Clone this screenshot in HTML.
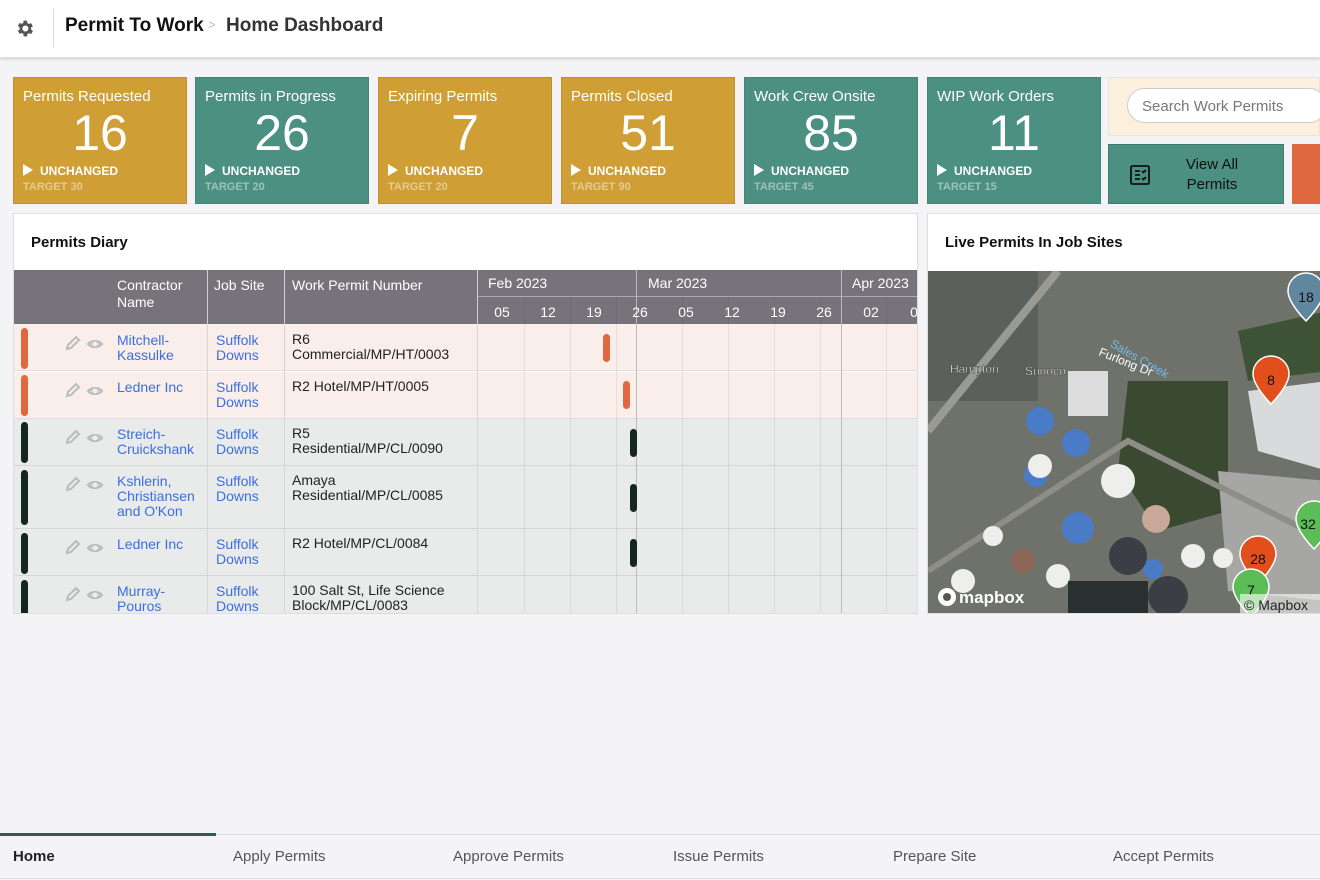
<!DOCTYPE html>
<html><head><meta charset="utf-8"><style>
*{box-sizing:border-box;margin:0;padding:0}
body{width:1320px;height:880px;overflow:hidden;background:#f4f4f6;font-family:"Liberation Sans",sans-serif;position:relative;color:#222}
.a{position:absolute}
.hdr{left:0;top:0;width:1320px;height:58px;background:#fff;box-shadow:0 1px 3px rgba(0,0,0,.15);border-bottom:1px solid #ddd}
.card{top:77px;width:174px;height:127px;color:#fff;border:1px solid rgba(0,0,0,.08)}
.gold{background:#cf9e34}.teal{background:#4b9080}
.card .t{position:absolute;left:9px;top:10px;font-size:15px}
.card .n{position:absolute;left:0;width:100%;text-align:center;top:28px;font-size:50px;line-height:54px}
.card .u{position:absolute;left:9px;top:86px;font-size:12px;font-weight:bold}
.card .u:before{content:"";display:inline-block;border-left:10px solid #fff;border-top:6px solid transparent;border-bottom:6px solid transparent;vertical-align:-1px;margin-right:7px}
.card .g{position:absolute;left:9px;top:103px;font-size:11px;font-weight:bold;color:rgba(255,255,255,.45)}
.panel{background:#fff;border:1px solid #ddd}
.th{background:#77737a;color:#fff;font-size:14px}
.lnk{color:#3b6fe0;font-size:14px;line-height:15px}
.txt{font-size:14px;line-height:15px;color:#222}
.nav{font-size:15px;color:#555;top:848px}
</style></head><body>
<div class="a hdr">
<svg class="a" style="left:14px;top:18px" width="21" height="21" viewBox="0 0 24 24"><path fill="#555" d="M19.4 13a7.5 7.5 0 000-2l2.1-1.6-2-3.5-2.5 1a7 7 0 00-1.7-1L15 3h-4l-.4 2.7a7 7 0 00-1.7 1l-2.5-1-2 3.5L6.6 11a7.5 7.5 0 000 2l-2.1 1.6 2 3.5 2.5-1a7 7 0 001.7 1L11 21h4l.4-2.7a7 7 0 001.7-1l2.5 1 2-3.5zM13 15.5a3.5 3.5 0 110-7 3.5 3.5 0 010 7z"/></svg>
<div class="a" style="left:53px;top:9px;width:1px;height:38px;background:#ddd"></div>
<div class="a" style="left:65px;top:15px;font-size:19px;font-weight:bold;color:#111">Permit To Work</div>
<div class="a" style="left:208px;top:17px;font-size:13px;color:#bbb">&gt;</div>
<div class="a" style="left:226px;top:15px;font-size:19px;font-weight:bold;color:#333">Home Dashboard</div>
</div>

<div class="a card gold" style="left:13px"><div class="t">Permits Requested</div><div class="n">16</div><div class="u">UNCHANGED</div><div class="g">TARGET 30</div></div>
<div class="a card teal" style="left:195px"><div class="t">Permits in Progress</div><div class="n">26</div><div class="u">UNCHANGED</div><div class="g">TARGET 20</div></div>
<div class="a card gold" style="left:378px"><div class="t">Expiring Permits</div><div class="n">7</div><div class="u">UNCHANGED</div><div class="g">TARGET 20</div></div>
<div class="a card gold" style="left:561px"><div class="t">Permits Closed</div><div class="n">51</div><div class="u">UNCHANGED</div><div class="g">TARGET 90</div></div>
<div class="a card teal" style="left:744px"><div class="t">Work Crew Onsite</div><div class="n">85</div><div class="u">UNCHANGED</div><div class="g">TARGET 45</div></div>
<div class="a card teal" style="left:927px"><div class="t">WIP Work Orders</div><div class="n">11</div><div class="u">UNCHANGED</div><div class="g">TARGET 15</div></div>

<div class="a" style="left:1108px;top:77px;width:212px;height:59px;background:#fcf0dc;border:1px solid #e4e4e4"></div>
<div class="a" style="left:1127px;top:88px;width:200px;height:35px;background:#fff;border:1px solid #ccc;border-radius:18px;font-size:15px;color:#777;padding:9px 0 0 14px">Search Work Permits</div>
<div class="a" style="left:1108px;top:144px;width:176px;height:60px;background:#4b9080;border:1px solid #3f7a6c"></div>
<svg class="a" style="left:1130px;top:165px" width="20" height="20" viewBox="0 0 20 20" fill="none" stroke="#111" stroke-width="1.8"><rect x="1" y="1" width="18" height="18" rx="1.5"/><path d="M5 6h5M5 10h5M5 14h5M12 6l1.5 1.5L16 5M12 13l1.5 1.5L16 12"/></svg>
<div class="a" style="left:1160px;top:155px;width:104px;text-align:center;font-size:15px;line-height:20px;color:#111">View All<br>Permits</div>
<div class="a" style="left:1292px;top:144px;width:30px;height:60px;background:#e0683f"></div>

<div class="a panel" style="left:13px;top:213px;width:905px;height:401px;overflow:hidden">
<div class="a" style="left:17px;top:20px;font-size:15px;font-weight:bold;color:#111">Permits Diary</div>
<div class="a th" style="left:0;top:56px;width:905px;height:54px"></div>
<div class="a" style="left:193px;top:56px;width:1px;height:345px;background:#d0d0d0"></div>
<div class="a" style="left:270px;top:56px;width:1px;height:345px;background:#d0d0d0"></div>
<div class="a" style="left:463px;top:56px;width:1px;height:345px;background:#d0d0d0"></div>
<div class="a" style="left:103px;top:63px;color:#fff;font-size:14px;line-height:17px">Contractor<br>Name</div>
<div class="a" style="left:200px;top:63px;color:#fff;font-size:14px">Job Site</div>
<div class="a" style="left:278px;top:63px;color:#fff;font-size:14px">Work Permit Number</div>
<div class="a" style="left:464px;top:82px;width:441px;height:1px;background:#aaa"></div>
<div class="a" style="left:474px;top:61px;color:#fff;font-size:14px">Feb 2023</div>
<div class="a" style="left:634px;top:61px;color:#fff;font-size:14px">Mar 2023</div>
<div class="a" style="left:838px;top:61px;color:#fff;font-size:14px">Apr 2023</div>
<div class="a" style="left:622px;top:56px;width:1px;height:345px;background:#bbb"></div>
<div class="a" style="left:827px;top:56px;width:1px;height:345px;background:#bbb"></div>
<div class="a" style="left:0;top:110px;width:905px;height:47px;background:#f9eeea;border-bottom:1px solid #ddd"></div>
<div class="a" style="left:0;top:158px;width:905px;height:47px;background:#f9eeea;border-bottom:1px solid #ddd"></div>
<div class="a" style="left:0;top:205px;width:905px;height:47px;background:#e9eaea;border-bottom:1px solid #d6d6d6"></div>
<div class="a" style="left:0;top:252px;width:905px;height:63px;background:#e9eaea;border-bottom:1px solid #d6d6d6"></div>
<div class="a" style="left:0;top:315px;width:905px;height:47px;background:#e9eaea;border-bottom:1px solid #d6d6d6"></div>
<div class="a" style="left:0;top:362px;width:905px;height:40px;background:#e9eaea"></div>
<div class="a" style="left:193px;top:110px;width:1px;height:291px;background:#d6d6d6"></div>
<div class="a" style="left:270px;top:110px;width:1px;height:291px;background:#d6d6d6"></div>
<div class="a" style="left:463px;top:110px;width:1px;height:291px;background:#d6d6d6"></div>
<div class="a" style="left:622px;top:110px;width:1px;height:291px;background:#bbb"></div>
<div class="a" style="left:827px;top:110px;width:1px;height:291px;background:#bbb"></div>
<svg class="a" style="left:464px;top:83px" width="441" height="318"><g stroke="rgba(0,0,0,.07)"><line x1="46.5" y1="0" x2="46.5" y2="318"/><line x1="92.5" y1="0" x2="92.5" y2="318"/><line x1="138.5" y1="0" x2="138.5" y2="318"/><line x1="204.5" y1="0" x2="204.5" y2="318"/><line x1="250.5" y1="0" x2="250.5" y2="318"/><line x1="296.5" y1="0" x2="296.5" y2="318"/><line x1="342.5" y1="0" x2="342.5" y2="318"/><line x1="408.5" y1="0" x2="408.5" y2="318"/></g>
<g fill="#fff" font-size="14" font-family="Liberation Sans" text-anchor="middle"><text x="24" y="20">05</text><text x="70" y="20">12</text><text x="116" y="20">19</text><text x="162" y="20">26</text><text x="208" y="20">05</text><text x="254" y="20">12</text><text x="300" y="20">19</text><text x="346" y="20">26</text><text x="393" y="20">02</text><text x="436" y="20">0</text></g>
<rect x="125" y="37" width="7" height="28" rx="3.5" fill="#e0683f"/><rect x="145" y="84" width="7" height="28" rx="3.5" fill="#e0683f"/>
<rect x="152" y="132" width="7" height="28" rx="3.5" fill="#14261f"/><rect x="152" y="187" width="7" height="28" rx="3.5" fill="#14261f"/><rect x="152" y="242" width="7" height="28" rx="3.5" fill="#14261f"/>
</svg>
<div class="a" style="left:7px;top:114px;width:7px;height:41px;border-radius:4px;background:#e0683f"></div>
<div class="a" style="left:7px;top:161px;width:7px;height:41px;border-radius:4px;background:#e0683f"></div>
<div class="a" style="left:7px;top:208px;width:7px;height:41px;border-radius:4px;background:#14261f"></div>
<div class="a" style="left:7px;top:256px;width:7px;height:55px;border-radius:4px;background:#14261f"></div>
<div class="a" style="left:7px;top:319px;width:7px;height:41px;border-radius:4px;background:#14261f"></div>
<div class="a" style="left:7px;top:366px;width:7px;height:41px;border-radius:4px;background:#14261f"></div>
<svg class="a" style="left:50px;top:118px" width="50" height="280" fill="none" stroke="#bbb" stroke-width="2">
<g id="ic"><path d="M3 17l1-4L12 5l3 3-8 8z"/><path d="M24 12c3-4 11-4 14 0-3 4-11 4-14 0z" fill="#ccc" stroke="#bbb"/><circle cx="31" cy="12" r="2.5" fill="#eee" stroke="none"/></g>
<use href="#ic" y="47"/><use href="#ic" y="94"/><use href="#ic" y="141"/><use href="#ic" y="204"/><use href="#ic" y="251"/></svg>
<div class="a lnk" style="left:103px;top:119px">Mitchell-<br>Kassulke</div>
<div class="a lnk" style="left:103px;top:166px">Ledner Inc</div>
<div class="a lnk" style="left:103px;top:213px">Streich-<br>Cruickshank</div>
<div class="a lnk" style="left:103px;top:260px">Kshlerin,<br>Christiansen<br>and O'Kon</div>
<div class="a lnk" style="left:103px;top:323px">Ledner Inc</div>
<div class="a lnk" style="left:103px;top:370px">Murray-<br>Pouros</div>
<div class="a lnk" style="left:202px;top:119px">Suffolk<br>Downs</div>
<div class="a lnk" style="left:202px;top:166px">Suffolk<br>Downs</div>
<div class="a lnk" style="left:202px;top:213px">Suffolk<br>Downs</div>
<div class="a lnk" style="left:202px;top:260px">Suffolk<br>Downs</div>
<div class="a lnk" style="left:202px;top:323px">Suffolk<br>Downs</div>
<div class="a lnk" style="left:202px;top:370px">Suffolk<br>Downs</div>
<div class="a txt" style="left:278px;top:118px">R6<br>Commercial/MP/HT/0003</div>
<div class="a txt" style="left:278px;top:165px">R2 Hotel/MP/HT/0005</div>
<div class="a txt" style="left:278px;top:212px">R5<br>Residential/MP/CL/0090</div>
<div class="a txt" style="left:278px;top:259px">Amaya<br>Residential/MP/CL/0085</div>
<div class="a txt" style="left:278px;top:322px">R2 Hotel/MP/CL/0084</div>
<div class="a txt" style="left:278px;top:369px">100 Salt St, Life Science<br>Block/MP/CL/0083</div>
</div>

<div class="a panel" style="left:927px;top:213px;width:400px;height:401px;overflow:hidden">
<div class="a" style="left:17px;top:20px;font-size:15px;font-weight:bold;color:#111">Live Permits In Job Sites</div>
<svg class="a" style="left:0;top:57px" width="400" height="344" font-family="Liberation Sans">
<rect width="400" height="344" fill="#6f716b"/>
<rect x="0" y="0" width="110" height="130" fill="#5c605c"/>
<path d="M200 110 L300 110 L300 240 L230 260 L190 200z" fill="#3a4a30"/>
<path d="M310 60 L400 40 L400 100 L320 110z" fill="#3e5236"/>
<path d="M320 120 L400 110 L400 200 L330 180z" fill="#d8dadc"/>
<path d="M290 200 L400 210 L400 330 L300 320z" fill="#a6a7a4"/>
<path d="M0 160 L130 0" stroke="#9a9a94" stroke-width="8"/>
<path d="M0 300 L200 170 L400 270" stroke="#8e8d88" stroke-width="6" fill="none"/>
<rect x="140" y="100" width="40" height="45" fill="#dcdcdc"/>
<g fill="#4a7bc7"><circle cx="112" cy="150" r="14"/><circle cx="148" cy="172" r="14"/><circle cx="108" cy="204" r="12"/><circle cx="150" cy="257" r="16"/><circle cx="225" cy="298" r="10"/></g>
<g fill="#eeeeec"><circle cx="112" cy="195" r="12"/><circle cx="190" cy="210" r="17"/><circle cx="65" cy="265" r="10"/><circle cx="265" cy="285" r="12"/><circle cx="295" cy="287" r="10"/><circle cx="35" cy="310" r="12"/><circle cx="130" cy="305" r="12"/></g>
<g fill="#3b3e44"><circle cx="200" cy="285" r="19"/><circle cx="240" cy="325" r="20"/></g>
<circle cx="228" cy="248" r="14" fill="#c8a898"/><circle cx="95" cy="290" r="12" fill="#8c6656"/>
<rect x="140" y="310" width="80" height="40" fill="#2a3030"/>
<g fill="#fff" font-size="12" stroke="#333" stroke-width=".4"><text x="22" y="102">Hampton</text><text x="97" y="104">Sunoco</text></g>
<text x="180" y="80" fill="#7ab8e0" font-size="12" transform="rotate(30 190 80)">Sales Creek</text>
<text x="170" y="84" fill="#fff" font-size="12" transform="rotate(22 170 84)">Furlong Dr</text>
<g stroke="#fff" stroke-width="1.5"><path d="M378 2a18 18 0 0118 18c0 12-18 30-18 30s-18-18-18-30a18 18 0 0118-18z" fill="#60879e"/><path d="M343 85a18 18 0 0118 18c0 12-18 30-18 30s-18-18-18-30a18 18 0 0118-18z" fill="#e24e1c"/><path d="M386 230a18 18 0 0118 18c0 12-18 30-18 30s-18-18-18-30a18 18 0 0118-18z" fill="#5cbd57"/><path d="M330 265a18 18 0 0118 18c0 12-18 30-18 30s-18-18-18-30a18 18 0 0118-18z" fill="#e24e1c"/><path d="M323 298a18 18 0 0118 18c0 12-18 30-18 30s-18-18-18-30a18 18 0 0118-18z" fill="#5cbd57"/></g>
<g font-size="14" fill="#111" text-anchor="middle"><text x="378" y="31">18</text><text x="343" y="114">8</text><text x="380" y="258">32</text><text x="330" y="293">28</text><text x="323" y="324">7</text></g>
<circle cx="19" cy="326" r="9" fill="#fff"/><circle cx="19" cy="326" r="4" fill="#555"/>
<text x="31" y="332" font-size="17" font-weight="bold" fill="#fff">mapbox</text>
<rect x="312" y="323" width="90" height="21" fill="rgba(255,255,255,.6)"/>
<text x="316" y="339" font-size="14" fill="#222">© Mapbox</text>
</svg>
</div>

<div class="a" style="left:0;top:834px;width:1320px;height:1px;background:#ddd"></div>
<div class="a" style="left:0;top:833px;width:216px;height:3px;background:#2f5e50"></div>
<div class="a" style="left:0;top:878px;width:1320px;height:1px;background:#ddd"></div>
<div class="a nav" style="left:13px;color:#222;font-weight:bold">Home</div>
<div class="a nav" style="left:233px">Apply Permits</div>
<div class="a nav" style="left:453px">Approve Permits</div>
<div class="a nav" style="left:673px">Issue Permits</div>
<div class="a nav" style="left:893px">Prepare Site</div>
<div class="a nav" style="left:1113px">Accept Permits</div>
</body></html>
